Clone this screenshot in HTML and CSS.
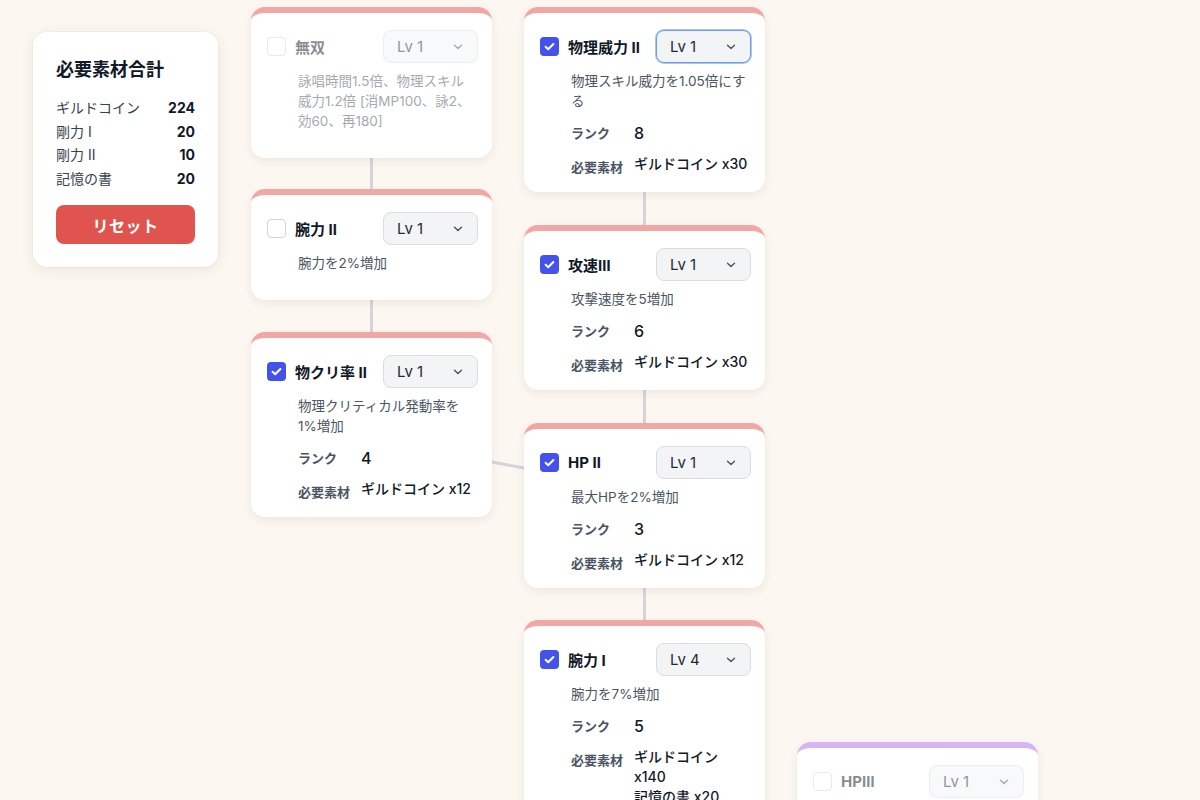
FILE: index.html
```html
<!DOCTYPE html>
<html lang="ja">
<head>
<meta charset="utf-8">
<title>スキルツリー</title>
<link rel="stylesheet" href="styles.css">
</head>
<body>
<div class="canvas">
  <svg class="links" width="1200" height="800" viewBox="0 0 1200 800">
    <g stroke="#d4d5da" stroke-width="3" fill="none">
      <line x1="371.5" y1="150" x2="371.5" y2="195"/>
      <line x1="371.5" y1="295" x2="371.5" y2="338"/>
      <line x1="644.5" y1="185" x2="644.5" y2="230"/>
      <line x1="644.5" y1="385" x2="644.5" y2="430"/>
      <line x1="644.5" y1="580" x2="644.5" y2="626"/>
      <line x1="470" y1="457.8" x2="545" y2="472"/>
    </g>
  </svg>

  <aside class="summary">
    <h2 class="summary-title">必要素材合計</h2>
    <ul class="summary-list">
      <li><span>ギルドコイン</span><b>224</b></li>
      <li><span>剛力 Ⅰ</span><b>20</b></li>
      <li><span>剛力 Ⅱ</span><b>10</b></li>
      <li><span>記憶の書</span><b>20</b></li>
    </ul>
    <button class="reset">リセット</button>
  </aside>

  <!-- column 1 -->
  <div class="node collapsed locked" style="left:251px;top:7px">
    <div class="node-content">
      <div class="node-head">
        <span class="check"></span>
        <span class="node-title">無双</span>
        <div class="lv"><span>Lv 1</span><svg width="10" height="6" viewBox="0 0 10 6"><path d="M1.5 1.2 5 4.6 8.5 1.2" fill="none" stroke="currentColor" stroke-width="1.4" stroke-linecap="round" stroke-linejoin="round"/></svg></div>
      </div>
      <p class="desc">詠唱時間1.5倍、物理スキル<br>威力1.2倍 [消MP100、詠2、<br>効60、再180]</p>
    </div>
  </div>

  <div class="node collapsed" style="left:251px;top:189px">
    <div class="node-content">
      <div class="node-head">
        <span class="check"></span>
        <span class="node-title">腕力 Ⅱ</span>
        <div class="lv"><span>Lv 1</span><svg width="10" height="6" viewBox="0 0 10 6"><path d="M1.5 1.2 5 4.6 8.5 1.2" fill="none" stroke="currentColor" stroke-width="1.4" stroke-linecap="round" stroke-linejoin="round"/></svg></div>
      </div>
      <p class="desc">腕力を2%増加</p>
    </div>
  </div>

  <div class="node" style="left:251px;top:332px">
    <div class="node-content">
      <div class="node-head">
        <span class="check on"><svg width="19" height="19" viewBox="0 0 19 19"><path d="M5.6 9.8 8.2 12.2 13.4 7" fill="none" stroke="#fff" stroke-width="2" stroke-linecap="round" stroke-linejoin="round"/></svg></span>
        <span class="node-title">物クリ率 Ⅱ</span>
        <div class="lv"><span>Lv 1</span><svg width="10" height="6" viewBox="0 0 10 6"><path d="M1.5 1.2 5 4.6 8.5 1.2" fill="none" stroke="currentColor" stroke-width="1.4" stroke-linecap="round" stroke-linejoin="round"/></svg></div>
      </div>
      <p class="desc">物理クリティカル発動率を<br>1%増加</p>
      <dl class="info">
        <dt>ランク</dt><dd class="rank">4</dd>
        <dt class="mat-label">必要素材</dt><dd class="mat">ギルドコイン x12</dd>
      </dl>
    </div>
  </div>

  <!-- column 2 -->
  <div class="node" style="left:524px;top:7px">
    <div class="node-content">
      <div class="node-head">
        <span class="check on"><svg width="19" height="19" viewBox="0 0 19 19"><path d="M5.6 9.8 8.2 12.2 13.4 7" fill="none" stroke="#fff" stroke-width="2" stroke-linecap="round" stroke-linejoin="round"/></svg></span>
        <span class="node-title">物理威力 Ⅱ</span>
        <div class="lv focus"><span>Lv 1</span><svg width="10" height="6" viewBox="0 0 10 6"><path d="M1.5 1.2 5 4.6 8.5 1.2" fill="none" stroke="currentColor" stroke-width="1.4" stroke-linecap="round" stroke-linejoin="round"/></svg></div>
      </div>
      <p class="desc">物理スキル威力を1.05倍にす<br>る</p>
      <dl class="info">
        <dt>ランク</dt><dd class="rank">8</dd>
        <dt class="mat-label">必要素材</dt><dd class="mat">ギルドコイン x30</dd>
      </dl>
    </div>
  </div>

  <div class="node" style="left:524px;top:225px">
    <div class="node-content">
      <div class="node-head">
        <span class="check on"><svg width="19" height="19" viewBox="0 0 19 19"><path d="M5.6 9.8 8.2 12.2 13.4 7" fill="none" stroke="#fff" stroke-width="2" stroke-linecap="round" stroke-linejoin="round"/></svg></span>
        <span class="node-title">攻速Ⅲ</span>
        <div class="lv"><span>Lv 1</span><svg width="10" height="6" viewBox="0 0 10 6"><path d="M1.5 1.2 5 4.6 8.5 1.2" fill="none" stroke="currentColor" stroke-width="1.4" stroke-linecap="round" stroke-linejoin="round"/></svg></div>
      </div>
      <p class="desc">攻撃速度を5増加</p>
      <dl class="info">
        <dt>ランク</dt><dd class="rank">6</dd>
        <dt class="mat-label">必要素材</dt><dd class="mat">ギルドコイン x30</dd>
      </dl>
    </div>
  </div>

  <div class="node" style="left:524px;top:423px">
    <div class="node-content">
      <div class="node-head">
        <span class="check on"><svg width="19" height="19" viewBox="0 0 19 19"><path d="M5.6 9.8 8.2 12.2 13.4 7" fill="none" stroke="#fff" stroke-width="2" stroke-linecap="round" stroke-linejoin="round"/></svg></span>
        <span class="node-title">HP Ⅱ</span>
        <div class="lv"><span>Lv 1</span><svg width="10" height="6" viewBox="0 0 10 6"><path d="M1.5 1.2 5 4.6 8.5 1.2" fill="none" stroke="currentColor" stroke-width="1.4" stroke-linecap="round" stroke-linejoin="round"/></svg></div>
      </div>
      <p class="desc">最大HPを2%増加</p>
      <dl class="info">
        <dt>ランク</dt><dd class="rank">3</dd>
        <dt class="mat-label">必要素材</dt><dd class="mat">ギルドコイン x12</dd>
      </dl>
    </div>
  </div>

  <div class="node" style="left:524px;top:620px">
    <div class="node-content">
      <div class="node-head">
        <span class="check on"><svg width="19" height="19" viewBox="0 0 19 19"><path d="M5.6 9.8 8.2 12.2 13.4 7" fill="none" stroke="#fff" stroke-width="2" stroke-linecap="round" stroke-linejoin="round"/></svg></span>
        <span class="node-title">腕力 Ⅰ</span>
        <div class="lv"><span>Lv 4</span><svg width="10" height="6" viewBox="0 0 10 6"><path d="M1.5 1.2 5 4.6 8.5 1.2" fill="none" stroke="currentColor" stroke-width="1.4" stroke-linecap="round" stroke-linejoin="round"/></svg></div>
      </div>
      <p class="desc">腕力を7%増加</p>
      <dl class="info">
        <dt>ランク</dt><dd class="rank">5</dd>
        <dt class="mat-label">必要素材</dt><dd class="mat">ギルドコイン x140<br>記憶の書 x20</dd>
      </dl>
    </div>
  </div>

  <!-- column 3 -->
  <div class="node collapsed locked purple" style="left:797px;top:742px">
    <div class="node-content">
      <div class="node-head">
        <span class="check"></span>
        <span class="node-title">HPⅢ</span>
        <div class="lv"><span>Lv 1</span><svg width="10" height="6" viewBox="0 0 10 6"><path d="M1.5 1.2 5 4.6 8.5 1.2" fill="none" stroke="currentColor" stroke-width="1.4" stroke-linecap="round" stroke-linejoin="round"/></svg></div>
      </div>
      <p class="desc">最大HPを3%増加</p>
    </div>
  </div>
</div>
</body>
</html>
```

FILE: styles.css
```css
* { box-sizing: border-box; }

html, body {
  margin: 0;
  padding: 0;
}

body {
  background: #fcf7f0;
  font-family: Inter, "Noto Sans CJK JP", "Noto Sans", sans-serif;
  color: #111827;
  overflow: hidden;
}

.canvas {
  position: relative;
  width: 1200px;
  height: 800px;
  overflow: hidden;
}

.links {
  position: absolute;
  left: 0;
  top: 0;
}

/* summary panel */
.summary {
  position: absolute;
  left: 33px;
  top: 32px;
  width: 185px;
  padding: 26px 23px 23px;
  background: #fff;
  border-radius: 14px;
  box-shadow: 0 3px 14px rgba(60, 40, 20, 0.09), 0 0 0 1px rgba(0, 0, 0, 0.025);
  z-index: 2;
}

.summary-title {
  margin: 0;
  font-size: 18px;
  line-height: 24px;
  font-weight: 700;
  color: #111827;
}

.summary-list {
  list-style: none;
  margin: 14px 0 0;
  padding: 0;
}

.summary-list li {
  display: flex;
  justify-content: space-between;
  font-size: 14px;
  line-height: 23.6px;
  color: #374151;
}

.summary-list b {
  font-weight: 700;
  color: #111827;
}

.reset {
  display: block;
  width: 100%;
  height: 39px;
  margin-top: 15px;
  border: 0;
  border-radius: 8px;
  background: #e0544f;
  color: #fff;
  font-family: inherit;
  font-size: 16px;
  font-weight: 700;
  letter-spacing: 0.5px;
}

/* skill nodes */
.node {
  position: absolute;
  width: 241px;
  background: #fff;
  border-top: 6px solid #f1a7a3;
  border-radius: 14px;
  box-shadow: 0 3px 10px rgba(60, 40, 20, 0.08);
  padding: 17px 14px 15px 16px;
  z-index: 1;
}

.node.purple { border-top-color: #d6b4f6; }

.node.collapsed { padding-bottom: 27px; }

.node.locked .node-content { opacity: 0.5; }

.node-head {
  display: flex;
  align-items: center;
  height: 33px;
}

.check {
  flex: none;
  width: 19px;
  height: 19px;
  border: 1.5px solid #d1d5db;
  border-radius: 4px;
  background: #fff;
  display: flex;
  align-items: center;
  justify-content: center;
}

.check.on {
  border: 0;
  background: #4252ea;
}

.check svg { display: block; }

.node-title {
  flex: 1;
  margin-left: 9px;
  font-size: 15px;
  font-weight: 700;
  color: #111827;
  white-space: nowrap;
}

.lv {
  flex: none;
  width: 95px;
  height: 33px;
  display: flex;
  align-items: center;
  justify-content: space-between;
  padding: 0 14px 0 13px;
  background: #f3f4f6;
  border: 1px solid #d9dce1;
  border-radius: 8px;
  font-size: 15px;
  color: #1f2937;
}

.lv svg { color: #4b5563; }

.lv.focus {
  border: 1.5px solid #6e9ded;
  box-shadow: 0 0 0 1px #a9c6f3;
}

.desc {
  margin: 8px 0 0 31px;
  font-size: 13.5px;
  line-height: 20px;
  color: #4b5563;
  white-space: nowrap;
}

.info {
  display: grid;
  grid-template-columns: 63px 1fr;
  row-gap: 10px;
  margin: 11px 0 0 31px;
}

.info dt {
  font-size: 13px;
  font-weight: 600;
  color: #4b5563;
  line-height: 22px;
}

.info dd {
  margin: 0;
  color: #111827;
}

.info .rank {
  font-size: 16px;
  font-weight: 500;
  line-height: 22px;
}

.info .mat-label {
  line-height: 20px;
  padding-top: 3px;
}

.info .mat {
  font-size: 14px;
  font-weight: 500;
  line-height: 20px;
}
```
